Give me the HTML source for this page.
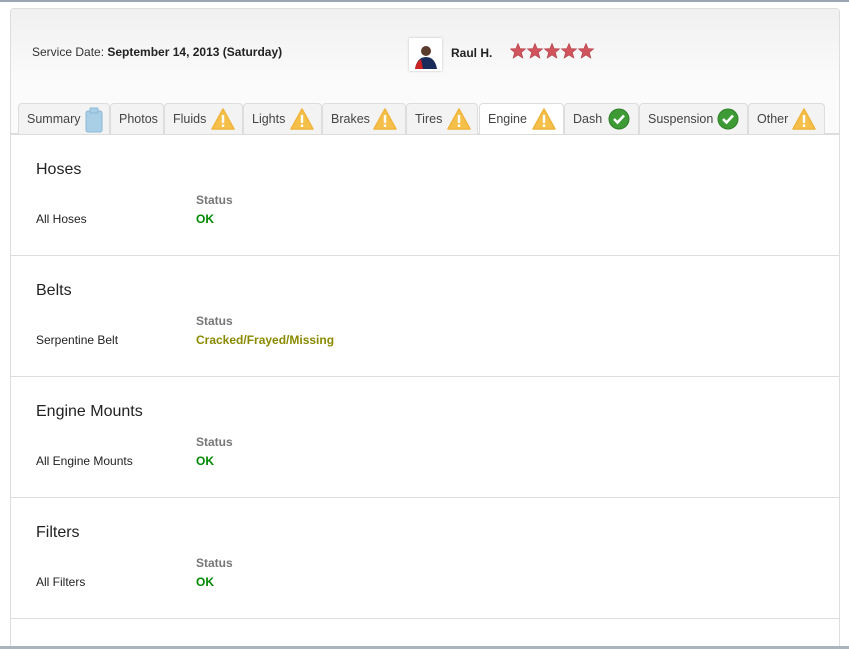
<!DOCTYPE html>
<html style="overflow:hidden;height:649px"><head><meta charset="utf-8"><style>
*{margin:0;padding:0;box-sizing:border-box}
body{width:849px;height:649px;background:#fff;font-family:"Liberation Sans",Arial,sans-serif;position:relative;overflow:hidden;color:#222}
.top{position:absolute;left:0;top:0;width:849px;height:2px;background:#9aa6b2}
.bot{position:absolute;left:0;top:646px;width:849px;height:3px;background:#a9b4bf}
.panel{position:absolute;left:10px;top:8px;width:830px;height:638px;border:1px solid #ddd;border-bottom:none;border-radius:4px 4px 0 0;background:#fff}
.head{position:absolute;left:11px;top:9px;width:828px;height:125px;background:linear-gradient(#f0f0f0,#fbfbfb 60%,#fbfbfb);border-radius:4px 4px 0 0;border-bottom:1px solid #ddd}
.abs{position:absolute}
.tab{position:absolute;top:103px;height:31px;border:1px solid #ddd;border-bottom:none;border-radius:4px 4px 0 0;background:#f3f3f3;font-size:12.5px;color:#444;padding:8px 0 0 8px;white-space:nowrap}
.tab.act{background:#fff;height:32px}
.ic{position:absolute;top:4px}
.sec{position:absolute;left:11px;width:828px;height:121px;border-bottom:1px solid #ddd}
.sec h3{position:absolute;left:25px;top:26px;font-size:16px;font-weight:normal;color:#222}
.sec .st{position:absolute;left:185px;top:58px;font-size:12px;font-weight:bold;color:#777}
.sec .lb{position:absolute;left:25px;top:77px;font-size:12px;color:#222}
.sec .v{position:absolute;left:185px;top:77px;font-size:12px;font-weight:bold;color:#080}
</style></head><body>
<div class="top"></div>
<div class="panel"></div>
<div class="head"></div>
<div class="abs" style="left:32px;top:45px;font-size:12px;color:#333">Service Date: <b style="color:#222">September 14, 2013 (Saturday)</b></div>
<div class="abs" style="left:409px;top:38px;width:33px;height:33px;background:#fff;box-shadow:0 0 2px #bbb">
<svg width="33" height="33"><circle cx="17" cy="13" r="5" fill="#5a3a2a"/><path d="M6 31 Q8 19 17 19 Q26 19 28 31Z" fill="#1a2a5a"/><path d="M6 31 Q7 24 12 21 L14 31Z" fill="#c22"/></svg></div>
<div class="abs" style="left:451px;top:46px;font-size:12px;font-weight:bold;color:#222">Raul H.</div>
<svg class="abs" style="left:510px;top:43px" width="88" height="18">
<defs><polygon id="s" points="8,0.5 10.1,5.6 15.5,5.9 11.3,9.4 12.8,15 8,11.9 3.2,15 4.7,9.4 0.5,5.9 5.9,5.6" fill="#d0545c" stroke="#b8404a" stroke-width=".7"/></defs>
<use href="#s" x="0"/><use href="#s" x="17"/><use href="#s" x="34"/><use href="#s" x="51"/><use href="#s" x="68"/></svg>

<div class="tab" style="left:18px;width:92px">Summary<svg class="ic" style="left:65px;top:3px" width="20" height="26"><rect x="2" y="4" width="16" height="21" rx="2" fill="#a9cfe6" stroke="#8bb8d4"/><rect x="6" y="1" width="8" height="5" rx="1" fill="#a9cfe6" stroke="#8bb8d4"/></svg></div>
<div class="tab" style="left:110px;width:54px">Photos</div>
<div class="tab" style="left:164px;width:79px">Fluids<svg class="ic" style="left:46px" width="24" height="22"><use href="#w"/></svg></div>
<div class="tab" style="left:243px;width:79px">Lights<svg class="ic" style="left:46px" width="24" height="22"><use href="#w"/></svg></div>
<div class="tab" style="left:322px;width:84px">Brakes<svg class="ic" style="left:50px" width="24" height="22"><use href="#w"/></svg></div>
<div class="tab" style="left:406px;width:72px">Tires<svg class="ic" style="left:40px" width="24" height="22"><use href="#w"/></svg></div>
<div class="tab act" style="left:479px;width:85px">Engine<svg class="ic" style="left:52px" width="24" height="22"><use href="#w"/></svg></div>
<div class="tab" style="left:564px;width:75px">Dash<svg class="ic" style="left:43px;top:4px" width="22" height="22"><use href="#c"/></svg></div>
<div class="tab" style="left:639px;width:109px">Suspension<svg class="ic" style="left:77px;top:4px" width="22" height="22"><use href="#c"/></svg></div>
<div class="tab" style="left:748px;width:77px">Other<svg class="ic" style="left:43px" width="24" height="22"><use href="#w"/></svg></div>
<svg width="0" height="0" style="position:absolute"><defs>
<g id="w"><path d="M12 1 L23 21 L1 21Z" fill="#f5c04a" stroke="#f0b43a" stroke-linejoin="round" stroke-width="1.5"/><rect x="10.8" y="7" width="2.4" height="8" fill="#fff"/><rect x="10.8" y="16.5" width="2.4" height="2.4" fill="#fff"/></g>
<g id="c"><circle cx="11" cy="11" r="10" fill="#3e9a34" stroke="#2f7f28"/><path d="M6 11 L9.5 14.5 L16 7.5" fill="none" stroke="#fff" stroke-width="2.6"/></g>
</defs></svg>
<div class="abs" style="left:11px;top:134px;width:828px;height:1px;background:#ddd"></div>

<div class="sec" style="top:135px"><h3>Hoses</h3><div class="st">Status</div><div class="lb">All Hoses</div><div class="v">OK</div></div>
<div class="sec" style="top:256px"><h3>Belts</h3><div class="st">Status</div><div class="lb">Serpentine Belt</div><div class="v" style="color:#8a8a00">Cracked/Frayed/Missing</div></div>
<div class="sec" style="top:377px"><h3>Engine Mounts</h3><div class="st">Status</div><div class="lb">All Engine Mounts</div><div class="v">OK</div></div>
<div class="sec" style="top:498px"><h3>Filters</h3><div class="st">Status</div><div class="lb">All Filters</div><div class="v">OK</div></div>
<div class="bot"></div>
</body></html>
